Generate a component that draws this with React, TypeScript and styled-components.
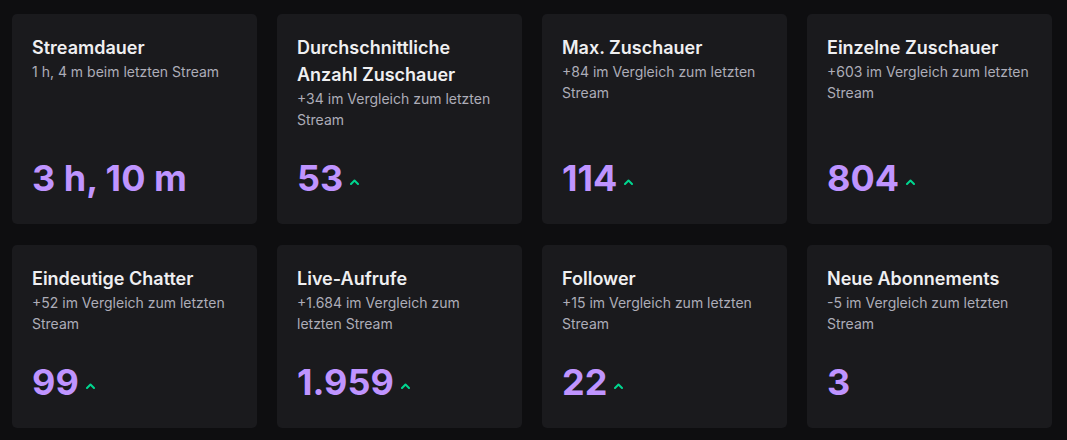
import styled, {createGlobalStyle} from 'styled-components';
import React from 'react';

const stats = [
    {title: 'Streamdauer', sub: '1 h, 4 m beim letzten Stream', value: '3 h, 10 m', up: false},
    {title: 'Durchschnittliche Anzahl Zuschauer', sub: '+34 im Vergleich zum letzten Stream', value: '53', up: true},
    {title: 'Max. Zuschauer', sub: '+84 im Vergleich zum letzten Stream', value: '114', up: true},
    {title: 'Einzelne Zuschauer', sub: '+603 im Vergleich zum letzten Stream', value: '804', up: true},
    {title: 'Eindeutige Chatter', sub: '+52 im Vergleich zum letzten Stream', value: '99', up: true},
    {title: 'Live-Aufrufe', sub: '+1.684 im Vergleich zum letzten Stream', value: '1.959', up: true},
    {title: 'Follower', sub: '+15 im Vergleich zum letzten Stream', value: '22', up: true},
    {title: 'Neue Abonnements', sub: '-5 im Vergleich zum letzten Stream', value: '3', up: false},
];

export default function App() {
    return (
        <>
            <GlobalStyle/>
            <Page>
                <Grid>
                    {stats.map((s) => <StatCard key={s.title} {...s}/>)}
                </Grid>
            </Page>
        </>
    )
}

function StatCard(props) {
    return (
        <Card>
            <Title>{props.title}</Title>
            <Sub>{props.sub}</Sub>
            <ValueRow>
                <Value>{props.value}</Value>
                {props.up && <UpArrow/>}
            </ValueRow>
        </Card>
    )
}

function UpArrow() {
    return (
        <ArrowIcon width="9" height="6" viewBox="0 0 9 6">
            <path d="M1 5 L4.5 1.5 L8 5" fill="none" stroke="#00d68f" strokeWidth="2" strokeLinecap="round" strokeLinejoin="round"/>
        </ArrowIcon>
    )
}

const GlobalStyle = createGlobalStyle`
    html, body {
        margin: 0;
        background: #0e0e10;
    }
    body {
        font-family: Inter, "Noto Sans", sans-serif;
    }
`;

const Page = styled.div`
    width: 1067px;
    height: 440px;
    box-sizing: border-box;
    padding: 14px 15px 0 12px;
    background: #0e0e10;
`;

const Grid = styled.div`
    display: grid;
    grid-template-columns: repeat(4, 245px);
    column-gap: 20px;
    row-gap: 21px;
`;

const Card = styled.div`
    background: #1a1a1d;
    border-radius: 5px;
    padding: 20px;
    display: flex;
    flex-direction: column;
`;

const Title = styled.div`
    color: #efeff1;
    font-size: 18px;
    font-weight: 600;
    line-height: 27px;
`;

const Sub = styled.div`
    color: #adadb8;
    font-size: 14px;
    line-height: 21px;
    margin-bottom: 22px;
`;

const ValueRow = styled.div`
    margin-top: auto;
    display: flex;
    align-items: center;
    height: 52px;
`;

const Value = styled.div`
    color: #bf94ff;
    font-size: 36px;
    font-weight: 700;
    line-height: 52px;
`;

const ArrowIcon = styled.svg`
    margin-left: 7px;
    margin-top: 8px;
`;
